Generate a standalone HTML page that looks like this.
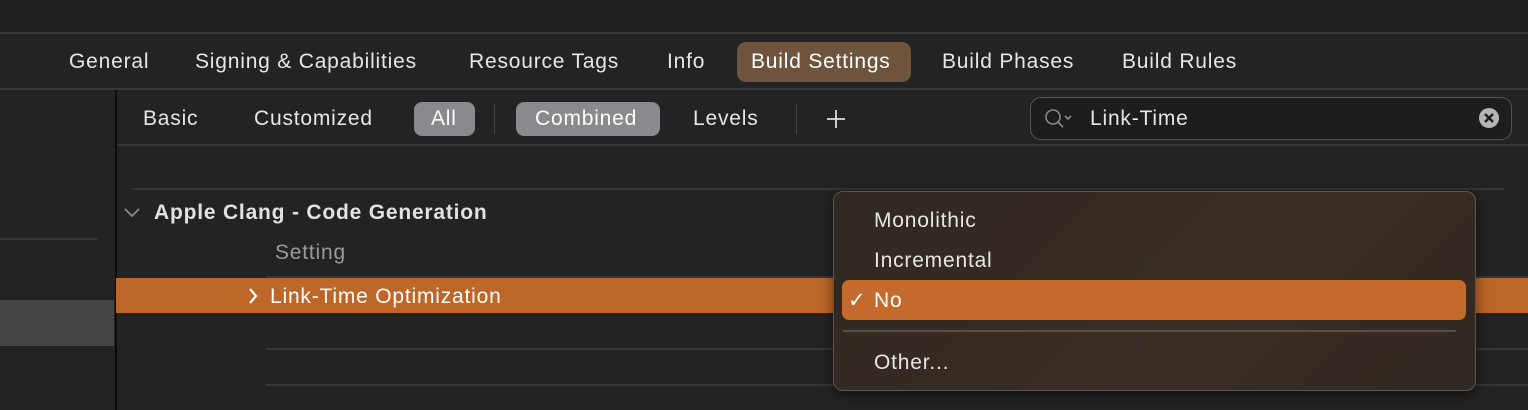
<!DOCTYPE html>
<html><head><meta charset="utf-8"><style>
*{margin:0;padding:0;box-sizing:border-box}
body{width:1528px;height:410px;background:#232323;position:relative;overflow:hidden;font-family:"Liberation Sans",sans-serif;color:#e6e6e6;font-size:21px;letter-spacing:.8px}
.a{position:absolute;white-space:nowrap}
.h{position:absolute;height:2px;background:#363636}
.t{line-height:24px;margin-top:1px}
</style></head><body>
<div class="a" style="left:0;top:0;width:1528px;height:32px;background:#212121"></div>
<div class="h" style="left:0;top:32px;width:1528px;background:#383838"></div>
<div class="a t" style="left:69px;top:49px">General</div>
<div class="a t" style="left:195px;top:49px">Signing &amp; Capabilities</div>
<div class="a t" style="left:469px;top:49px">Resource Tags</div>
<div class="a t" style="left:667px;top:49px">Info</div>
<div class="a" style="left:737px;top:42px;width:174px;height:40px;background:#6e533d;border-radius:9px"></div>
<div class="a t" style="left:751px;top:49px;color:#fff">Build Settings</div>
<div class="a t" style="left:942px;top:49px">Build Phases</div>
<div class="a t" style="left:1122px;top:49px">Build Rules</div>
<div class="h" style="left:0;top:88px;width:1528px;background:#383838"></div>
<div class="a" style="left:115px;top:90px;width:2px;height:320px;background:#0c0c0c"></div>
<div class="a t" style="left:143px;top:106px">Basic</div>
<div class="a t" style="left:254px;top:106px">Customized</div>
<div class="a" style="left:414px;top:102px;width:61px;height:34px;background:#8a8a8e;border-radius:8px"></div>
<div class="a t" style="left:431px;top:106px;color:#fff">All</div>
<div class="a" style="left:494px;top:104px;width:1px;height:30px;background:#444"></div>
<div class="a" style="left:516px;top:102px;width:144px;height:34px;background:#8a8a8e;border-radius:8px"></div>
<div class="a t" style="left:535px;top:106px;color:#fff">Combined</div>
<div class="a t" style="left:693px;top:106px">Levels</div>
<div class="a" style="left:796px;top:104px;width:1px;height:30px;background:#444"></div>
<svg class="a" style="left:825px;top:108px" width="22" height="22"><path d="M11 2v18M2 11h18" stroke="#ddd" stroke-width="1.8"/></svg>
<div class="a" style="left:1030px;top:97px;width:482px;height:43px;border:1.5px solid #555;border-radius:11px;background:#1d1d1d"></div>
<svg class="a" style="left:1043px;top:106px" width="34" height="26"><circle cx="10" cy="11" r="7" fill="none" stroke="#8a8a8a" stroke-width="1.6"/><path d="M15 16l5 5M22 10l3 3 3-3" fill="none" stroke="#8a8a8a" stroke-width="1.6"/></svg>
<div class="a t" style="left:1090px;top:106px">Link-Time</div>
<svg class="a" style="left:1478px;top:107px" width="22" height="22"><circle cx="11" cy="11" r="10" fill="#b5b5b5"/><path d="M7 7l8 8M15 7l-8 8" stroke="#1d1d1d" stroke-width="2.4"/></svg>
<div class="h" style="left:117px;top:144px;width:1411px"></div>
<div class="h" style="left:132px;top:188px;width:1372px"></div>
<div class="h" style="left:0;top:238px;width:97px"></div>
<div class="a" style="left:0;top:300px;width:114px;height:46px;background:#454545"></div>
<svg class="a" style="left:123px;top:206px" width="18" height="14"><path d="M2 3l7 7 7-7" fill="none" stroke="#888" stroke-width="1.8"/></svg>
<div class="a t" style="left:154px;top:200px;font-weight:bold;color:#e2e2e2">Apple Clang - Code Generation</div>
<div class="a t" style="left:275px;top:240px;color:#9a9a9a">Setting</div>
<div class="h" style="left:266px;top:276px;width:1262px"></div>
<div class="a" style="left:116px;top:278px;width:1412px;height:35px;background:#bc6628"></div>
<svg class="a" style="left:246px;top:287px" width="14" height="18"><path d="M4 2l6 7-6 7" fill="none" stroke="#fff" stroke-width="2.2"/></svg>
<div class="a t" style="left:270px;top:284px;color:#fff">Link-Time Optimization</div>
<div class="h" style="left:266px;top:348px;width:1262px"></div>
<div class="h" style="left:266px;top:384px;width:1262px"></div>
<div class="a" style="left:833px;top:191px;width:643px;height:200px;background:linear-gradient(135deg,#2f2822,#3a2d24 60%,#302822);border:1.5px solid #5a5550;border-radius:10px;box-shadow:0 4px 12px rgba(0,0,0,.5)"></div>
<div class="a t" style="left:874px;top:208px">Monolithic</div>
<div class="a t" style="left:874px;top:248px">Incremental</div>
<div class="a" style="left:842px;top:280px;width:624px;height:40px;background:#c46a2d;border-radius:7px"></div>
<div class="a t" style="left:848px;top:288px;color:#fff">✓</div>
<div class="a t" style="left:874px;top:288px;color:#fff">No</div>
<div class="a" style="left:843px;top:330px;width:613px;height:2px;background:#5a4f46"></div>
<div class="a t" style="left:874px;top:350px">Other...</div>
</body></html>
